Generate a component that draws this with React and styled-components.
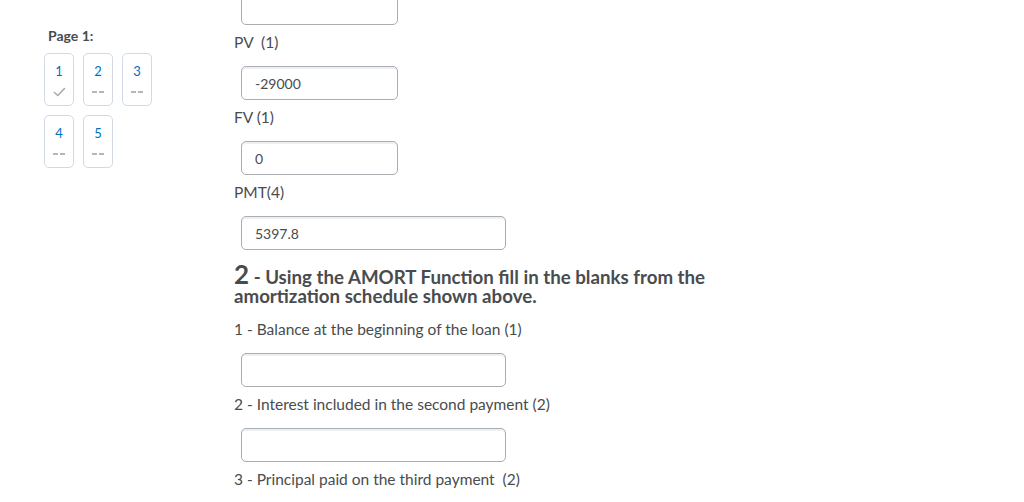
import React from "react";
import styled, { createGlobalStyle } from "styled-components";

const Global = createGlobalStyle`
  html, body { margin: 0; padding: 0; background: #fff; }
  body { font-family: Lato, "Open Sans", sans-serif; color: #494c4e; }
  #root { width: 1024px; height: 502px; overflow: hidden; }
`;

const Page = styled.div`
  display: flex;
  width: 1024px;
  height: 502px;
  overflow: hidden;
`;

const Nav = styled.aside`
  width: 190px;
  padding: 28px 0 0 44px;
  box-sizing: border-box;
`;

const NavTitle = styled.div`
  font-size: 14px;
  font-weight: 700;
  line-height: 16px;
  margin-left: 4px;
  margin-bottom: 9px;
  color: #494c4e;
`;

const TileGrid = styled.div`
  display: grid;
  grid-template-columns: repeat(3, 30px);
  column-gap: 9px;
  row-gap: 9px;
`;

const Tile = styled.div`
  width: 30px;
  height: 53px;
  box-sizing: border-box;
  border: 1px solid #d3d9e3;
  border-radius: 5px;
  display: flex;
  flex-direction: column;
  align-items: center;
  padding-top: 10px;
`;

const TileNum = styled.span`
  font-size: 13px;
  line-height: 15px;
  color: #006fbf;
`;

const TileMark = styled.span`
  margin-top: 6px;
  height: 14px;
  display: flex;
  align-items: center;
  gap: 2px;
`;

const Dash = styled.span`
  display: block;
  width: 5px;
  height: 1.5px;
  background: #b3b8bd;
`;

const Main = styled.main`
  flex: 1;
  padding-left: 44px;
  margin-top: -9px;
`;

const Input = styled.div`
  width: ${(p) => p.$w}px;
  height: 34px;
  box-sizing: border-box;
  margin-left: 7px;
  margin-bottom: ${(p) => p.$mb ?? 8}px;
  border: 1px solid #a9adb1;
  border-radius: 5px;
  box-shadow: inset 0 2px 0 0 rgba(185, 194, 208, 0.25);
  padding-left: 13px;
  display: flex;
  align-items: center;
  font-size: 14px;
  color: #494c4e;
`;

const Label = styled.div`
  font-size: 15.5px;
  line-height: 19px;
  margin-bottom: 14px;
  color: #494c4e;
  white-space: nowrap;
`;

const Heading = styled.div`
  margin-top: 14.5px;
  margin-bottom: 14px;
  font-size: 18.7px;
  font-weight: 700;
  line-height: 19px;
  color: #494c4e;
  width: 495px;
`;

const Big = styled.span`
  font-size: 26px;
  line-height: 19px;
`;

const Check = () => (
  <svg width="13" height="10" viewBox="0 0 13 10">
    <path d="M1.5 5.5 L4.8 8.5 L11.5 1.5" fill="none" stroke="#a6abb0" strokeWidth="1.6" strokeLinecap="round" strokeLinejoin="round" />
  </svg>
);

const tiles = [
  { n: 1, done: true },
  { n: 2 },
  { n: 3 },
  { n: 4 },
  { n: 5 },
];

export default function App() {
  return (
    <Page>
      <Global />
      <Nav>
        <NavTitle>Page 1:</NavTitle>
        <TileGrid>
          {tiles.map((t) => (
            <Tile key={t.n}>
              <TileNum>{t.n}</TileNum>
              <TileMark>
                {t.done ? (
                  <Check />
                ) : (
                  <>
                    <Dash />
                    <Dash />
                  </>
                )}
              </TileMark>
            </Tile>
          ))}
        </TileGrid>
      </Nav>
      <Main>
        <Input $w={157} />
        <Label>PV&nbsp; (1)</Label>
        <Input $w={157}>-29000</Input>
        <Label>FV (1)</Label>
        <Input $w={157}>0</Input>
        <Label>PMT(4)</Label>
        <Input $w={265} $mb={0}>5397.8</Input>
        <Heading>
          <Big>2</Big> - Using the AMORT Function fill in the blanks from the amortization schedule shown above.
        </Heading>
        <Label>1 - Balance at the beginning of the loan (1)</Label>
        <Input $w={265} />
        <Label>2 - Interest included in the second payment (2)</Label>
        <Input $w={265} />
        <Label>3 - Principal paid on the third payment&nbsp; (2)</Label>
      </Main>
    </Page>
  );
}
